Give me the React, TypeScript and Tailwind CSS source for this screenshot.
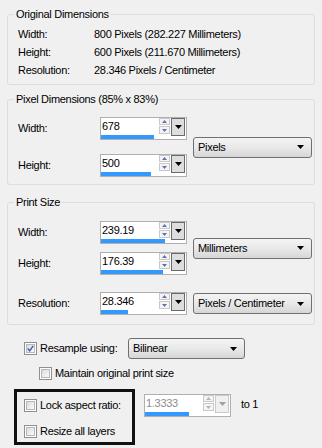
import React from "react";

const font = { fontFamily: '"Liberation Sans", Arial, sans-serif' };

function Tri({ color = "#000", w = 7, h = 4, up = false }: { color?: string; w?: number; h?: number; up?: boolean }) {
  return (
    <svg width={w} height={h} viewBox={`0 0 ${w} ${h}`} className="block">
      <polygon points={up ? `0,${h} ${w},${h} ${w / 2},0` : `0,0 ${w},0 ${w / 2},${h}`} fill={color} />
    </svg>
  );
}

function Spin({ value, bar, disabled }: { value: string; bar: string; disabled?: boolean }) {
  const arrow = disabled ? "#b5b5b5" : "#5b74b0";
  return (
    <div className="w-[87px] h-[23px] border border-[#b0b0b0] bg-white flex flex-col">
      <div className="flex h-[17px]">
        <div className={`flex-1 pl-[1px] leading-[17px] ${disabled ? "text-[#8d8d8d]" : "text-black"}`}>
          {value}
        </div>
        <div className="w-[11px] flex flex-col gap-[1px]">
          <div className="h-[7px] border border-[#c9c9c9] bg-[#f4f4f4] flex items-center justify-center">
            <Tri color={arrow} w={5} h={3} up />
          </div>
          <div className="h-[8px] border border-[#c9c9c9] bg-[#f4f4f4] flex items-center justify-center">
            <Tri color={arrow} w={5} h={3} />
          </div>
        </div>
        <div
          className={`w-[14px] ml-[1px] mr-[1px] h-[18px] border ${disabled ? "border-[#c9c9c9] bg-[#f0f0f0]" : "border-[#6a6a6a] bg-[#dedede]"} flex items-center justify-center`}
        >
          <Tri color={disabled ? "#a0a0a0" : "#000"} />
        </div>
      </div>
      <div className="h-[4px]">
        <div className={`h-[4px] bg-[#3399ff] ${bar}`} />
      </div>
    </div>
  );
}

function Combo({ text, w }: { text: string; w: string }) {
  return (
    <div
      className={`${w} h-[21px] rounded-[3px] border border-[#707070] bg-gradient-to-b from-[#f4f4f4] via-[#e9e9e9] to-[#d6d6d6] flex items-center pl-[4px] pr-[7px] text-black`}
    >
      <span className="flex-1">{text}</span>
      <Tri />
    </div>
  );
}

function Check({ checked }: { checked?: boolean }) {
  return (
    <div className="w-[13px] h-[13px] border border-[#8e8f8f] bg-white p-[1px] shrink-0">
      <div className="w-full h-full border border-[#b4b9be] bg-gradient-to-br from-[#dcdcdc] to-[#fbfbfb] flex items-center justify-center">
        {checked && (
          <svg width="9" height="9" viewBox="0 0 9 9" className="block">
            <path d="M1 4.5 L3.5 7.5 L8 1" stroke="#3d5bab" strokeWidth="1.8" fill="none" />
          </svg>
        )}
      </div>
    </div>
  );
}

function SpinRow({ label, value, bar }: { label: string; value: string; bar: string }) {
  return (
    <div className="flex items-center">
      <span className="w-[82px]">{label}</span>
      <Spin value={value} bar={bar} />
    </div>
  );
}

export default function App() {
  return (
    <div style={font} className="w-[322px] h-[448px] bg-[#f0f0f0] px-[7px] pt-[7px] text-[11px] tracking-[-0.3px] text-black overflow-hidden">
      <fieldset className="border border-[#d5dfe5] rounded-[3px] p-0 m-0 min-w-0">
        <legend className="ml-[6px] px-[2px] leading-[14px]">Original Dimensions</legend>
        <div className="pl-[10px] pt-[4px] pb-[5px]">
          {[
            ["Width:", "800 Pixels (282.227 Millimeters)"],
            ["Height:", "600 Pixels (211.670 Millimeters)"],
            ["Resolution:", "28.346 Pixels / Centimeter"],
          ].map(([k, v]) => (
            <div key={k} className="flex h-[18px] leading-[18px]">
              <span className="w-[76px]">{k}</span>
              <span>{v}</span>
            </div>
          ))}
        </div>
      </fieldset>

      <fieldset className="mt-[7px] border border-[#d5dfe5] rounded-[3px] p-0 m-0 min-w-0">
        <legend className="ml-[6px] px-[2px] leading-[14px]">Pixel Dimensions (85% x 83%)</legend>
        <div className="flex items-center pl-[10px] pr-[2px] pt-[11px] pb-[7px]">
          <div className="flex flex-col gap-[14px]">
            <SpinRow label="Width:" value="678" bar="w-[53px]" />
            <SpinRow label="Height:" value="500" bar="w-[50px]" />
          </div>
          <div className="ml-auto">
            <Combo text="Pixels" w="w-[119px]" />
          </div>
        </div>
      </fieldset>

      <fieldset className="mt-[10px] border border-[#d5dfe5] rounded-[3px] p-0 m-0 min-w-0">
        <legend className="ml-[6px] px-[2px] leading-[14px]">Print Size</legend>
        <div className="flex flex-col pl-[10px] pr-[2px] pt-[12px] pb-[9px]">
          <div className="flex items-center">
            <div className="flex flex-col gap-[8px]">
              <SpinRow label="Width:" value="239.19" bar="w-[64px]" />
              <SpinRow label="Height:" value="176.39" bar="w-[62px]" />
            </div>
            <div className="ml-auto">
              <Combo text="Millimeters" w="w-[119px]" />
            </div>
          </div>
          <div className="flex items-center mt-[17px]">
            <SpinRow label="Resolution:" value="28.346" bar="w-[27px]" />
            <div className="ml-auto">
              <Combo text="Pixels / Centimeter" w="w-[119px]" />
            </div>
          </div>
        </div>
      </fieldset>

      <div className="flex items-center mt-[13px] ml-[17px]">
        <Check checked />
        <span className="ml-[3px] w-[88px] leading-[13px]">Resample using:</span>
        <Combo text="Bilinear" w="w-[117px]" />
      </div>
      <div className="flex items-center mt-[8px] ml-[32px] leading-[13px]">
        <Check />
        <span className="ml-[3px]">Maintain original print size</span>
      </div>

      <div className="flex items-start mt-[9px] ml-[7px]">
        <div className="w-[121px] h-[56px] border-[3px] border-[#111] pl-[7px] pt-[7px] flex flex-col gap-[13px] leading-[13px]">
          <div className="flex items-center">
            <Check />
            <span className="ml-[3px]">Lock aspect ratio:</span>
          </div>
          <div className="flex items-center">
            <Check />
            <span className="ml-[3px]">Resize all layers</span>
          </div>
        </div>
        <div className="mt-[5px] ml-[9px]">
          <Spin value="1.3333" bar="w-[44px]" disabled />
        </div>
        <span className="ml-[10px] mt-[9px] leading-[13px]">to 1</span>
      </div>
    </div>
  );
}
